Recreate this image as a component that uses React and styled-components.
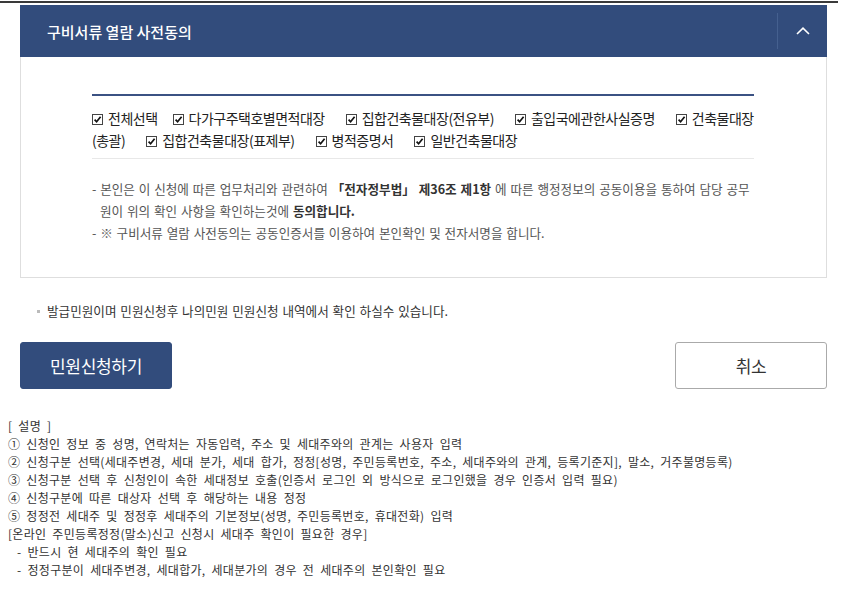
import React from "react";
import styled, { createGlobalStyle } from "styled-components";

const GlobalStyle = createGlobalStyle`
  html, body {
    margin: 0;
    padding: 0;
    background: #fff;
  }
  body {
    font-family: "Noto Sans CJK KR", "Noto Sans", sans-serif;
    color: #333;
  }
`;

const Page = styled.div`
  width: 842px;
  padding-top: 1px;
`;

const TopRule = styled.div`
  width: 838px;
  height: 2px;
  background: #3a3a3a;
`;

const Container = styled.div`
  width: 807px;
  margin: 2px 0 0 20px;
`;

const HeaderBar = styled.div`
  height: 52px;
  display: flex;
  align-items: center;
  justify-content: space-between;
  background: #324c7c;
`;

const Title = styled.h2`
  margin: 0 0 0 27px;
  font-size: 15px;
  font-weight: 500;
  color: #fff;
`;

const Toggle = styled.button`
  width: 50px;
  height: 36px;
  display: flex;
  align-items: center;
  justify-content: center;
  padding: 0;
  border: none;
  border-left: 1px solid #45608f;
  background: transparent;
  cursor: pointer;
`;

const Panel = styled.div`
  height: 221px;
  box-sizing: border-box;
  border: 1px solid #dedede;
  border-top: none;
  padding: 37px 72px 0 71px;
`;

const AgreeBox = styled.div`
  border-top: 2px solid #3b5283;
`;

const CheckList = styled.div`
  padding: 11px 0 7px;
  border-bottom: 1px solid #e8e8e8;
  font-size: 14px;
  line-height: 22px;
  letter-spacing: -0.5px;
  color: #222;
`;

const CheckItem = styled.label`
  margin-right: ${(p) => (p.$tight ? "15px" : "21px")};
`;

const Box = styled.span`
  display: inline-block;
  width: 11px;
  height: 11px;
  box-sizing: border-box;
  border: 1px solid #444;
  background: #fff;
  margin-right: 5px;
  vertical-align: -1px;
  svg {
    display: block;
  }
`;

const Notes = styled.ul`
  list-style: none;
  margin: 19px 0 0;
  padding: 0;
  font-size: 12.6px;
  line-height: 22px;
  word-spacing: 1px;
  color: #555;
`;

const Note = styled.li`
  padding-left: 8px;
  text-indent: -8px;
  strong {
    color: #333;
    font-weight: 700;
  }
`;

const InfoLine = styled.p`
  position: relative;
  margin: 24px 0 0;
  padding-left: 27px;
  font-size: 12.6px;
  line-height: 18px;
  word-spacing: 1px;
  color: #333;
  &::before {
    content: "";
    position: absolute;
    left: 17px;
    top: 8px;
    width: 3px;
    height: 3px;
    background: #bbb;
  }
`;

const ButtonRow = styled.div`
  display: flex;
  justify-content: space-between;
  margin-top: 22px;
`;

const Button = styled.button`
  width: 152px;
  height: 47px;
  border-radius: 3px;
  font-family: inherit;
  font-size: 17px;
  letter-spacing: -0.3px;
  cursor: pointer;
  border: 1px solid ${(p) => (p.$primary ? "#324c7c" : "#aaa")};
  background: ${(p) => (p.$primary ? "#324c7c" : "#fff")};
  color: ${(p) => (p.$primary ? "#fff" : "#333")};
`;

const Description = styled.div`
  margin-top: 28px;
  padding-left: 8px;
  font-size: 12px;
  line-height: 18px;
  letter-spacing: 0.3px;
  word-spacing: 3px;
  color: #333;
`;

const DescLine = styled.div`
  padding-left: ${(p) => (p.$indent ? "9px" : "0")};
`;

const Check = () => (
  <Box>
    <svg width="9" height="9" viewBox="0 0 9 9">
      <path d="M1.6 4.6 L3.6 6.8 L7.6 1.8" fill="none" stroke="#111" strokeWidth="1.7" />
    </svg>
  </Box>
);

const docs = [
  { label: "전체선택", tight: true },
  { label: "다가구주택호별면적대장" },
  { label: "집합건축물대장(전유부)" },
  { label: "출입국에관한사실증명" },
  { label: "건축물대장", wrap: "(총괄)" },
  { label: "집합건축물대장(표제부)" },
  { label: "병적증명서" },
  { label: "일반건축물대장" },
];

const descLines = [
  "[ 설명 ]",
  "① 신청인 정보 중 성명, 연락처는 자동입력, 주소 및 세대주와의 관계는 사용자 입력",
  "② 신청구분 선택(세대주변경, 세대 분가, 세대 합가, 정정[성명, 주민등록번호, 주소, 세대주와의 관계, 등록기준지], 말소, 거주불명등록)",
  "③ 신청구분 선택 후 신청인이 속한 세대정보 호출(인증서 로그인 외 방식으로 로그인했을 경우 인증서 입력 필요)",
  "④ 신청구분에 따른 대상자 선택 후 해당하는 내용 정정",
  "⑤ 정정전 세대주 및 정정후 세대주의 기본정보(성명, 주민등록번호, 휴대전화) 입력",
  "[온라인 주민등록정정(말소)신고 신청시 세대주 확인이 필요한 경우]",
];

const subLines = [
  "- 반드시 현 세대주의 확인 필요",
  "- 정정구분이 세대주변경, 세대합가, 세대분가의 경우 전 세대주의 본인확인 필요",
];

export default function App() {
  return (
    <Page>
      <GlobalStyle />
      <TopRule />
      <Container>
        <HeaderBar>
          <Title>구비서류 열람 사전동의</Title>
          <Toggle aria-label="접기">
            <svg width="14" height="8" viewBox="0 0 14 8">
              <path d="M1 7 L7 1.2 L13 7" fill="none" stroke="#fff" strokeWidth="1.6" />
            </svg>
          </Toggle>
        </HeaderBar>
        <Panel>
          <AgreeBox>
            <CheckList>
              {docs.map((d) => (
                <CheckItem key={d.label} $tight={d.tight}>
                  <Check />
                  {d.label}
                  {d.wrap && (
                    <>
                      <br />
                      {d.wrap}
                    </>
                  )}
                </CheckItem>
              ))}
            </CheckList>
            <Notes>
              <Note>
                - 본인은 이 신청에 따른 업무처리와 관련하여{" "}
                <strong>「전자정부법」 제36조 제1항</strong> 에 따른 행정정보의 공동이용을 통하여 담당 공무
                <br />
                원이 위의 확인 사항을 확인하는것에 <strong>동의합니다.</strong>
              </Note>
              <Note>- ※ 구비서류 열람 사전동의는 공동인증서를 이용하여 본인확인 및 전자서명을 합니다.</Note>
            </Notes>
          </AgreeBox>
        </Panel>
        <InfoLine>발급민원이며 민원신청후 나의민원 민원신청 내역에서 확인 하실수 있습니다.</InfoLine>
        <ButtonRow>
          <Button $primary>민원신청하기</Button>
          <Button>취소</Button>
        </ButtonRow>
      </Container>
      <Description>
        {descLines.map((l) => (
          <DescLine key={l}>{l}</DescLine>
        ))}
        {subLines.map((l) => (
          <DescLine key={l} $indent>
            {l}
          </DescLine>
        ))}
      </Description>
    </Page>
  );
}
